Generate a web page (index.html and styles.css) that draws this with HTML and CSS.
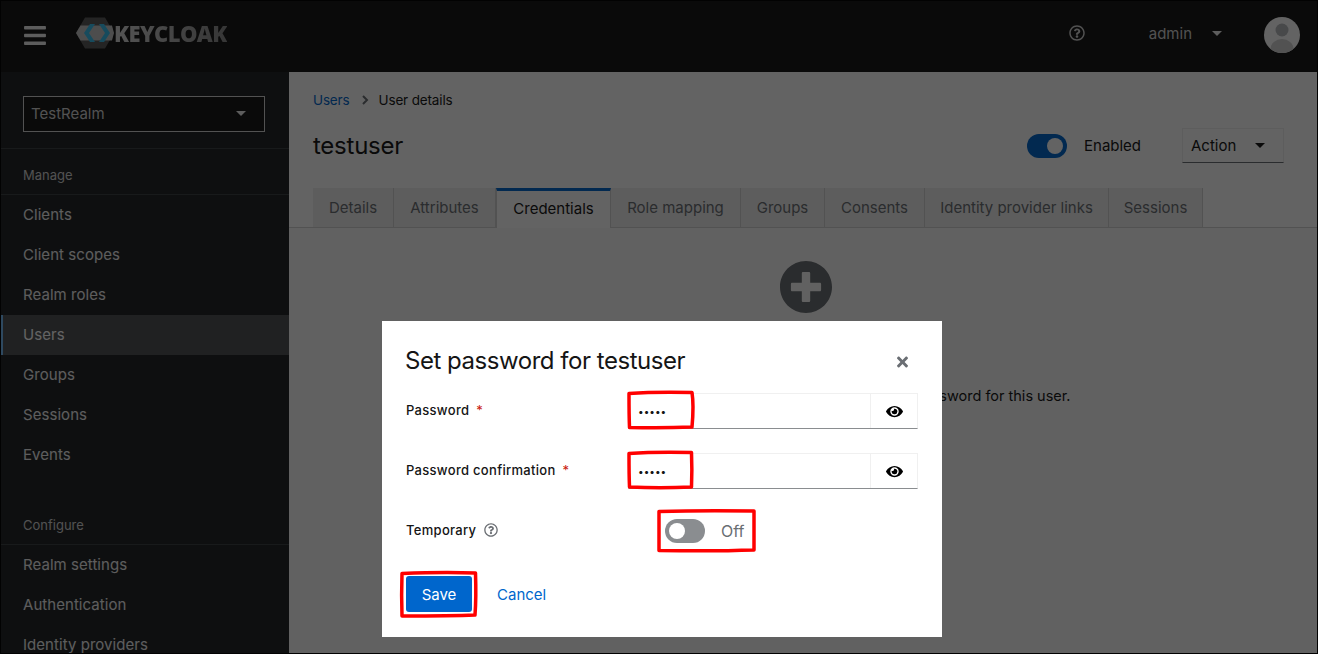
FILE: index.html
```html
<!DOCTYPE html>
<html lang="en">
<head>
<meta charset="utf-8">
<title>Keycloak</title>
<link rel="stylesheet" href="styles.css">
</head>
<body>
<div class="app">
  <header class="masthead">
    <button class="burger" aria-label="Menu"><svg viewBox="0 0 448 512" width="22" height="25"><path d="M16 132h416c8.837 0 16-7.163 16-16V76c0-8.837-7.163-16-16-16H16C7.163 60 0 67.163 0 76v40c0 8.837 7.163 16 16 16zm0 160h416c8.837 0 16-7.163 16-16v-40c0-8.837-7.163-16-16-16H16c-8.837 0-16 7.163-16 16v40c0 8.837 7.163 16 16 16zm0 160h416c8.837 0 16-7.163 16-16v-40c0-8.837-7.163-16-16-16H16c-8.837 0-16 7.163-16 16v40c0 8.837 7.163 16 16 16z"/></svg></button>
    <div class="logo">
      <svg class="logo-mark" viewBox="0 0 40 32" width="40" height="32">
        <path d="M0 16 9 0.5H29L38 16 29 31.5H9Z" fill="#5a5a5a"/>
        <path d="M0 16 4.5 8.5H36L38 16 36 23.5H4.5Z" fill="#c4c4c4"/>
        <path d="M14 7 8 16l6 9h5l-6-9 6-9Z" fill="#39c0f0"/>
        <path d="M23 7l6 9-6 9h5l6-9-6-9Z" fill="#39c0f0"/>
      </svg>
      <span class="logo-text">KEYCLOAK</span>
    </div>
    <div class="head-tools">
      <svg class="help" viewBox="0 0 512 512" width="16" height="16"><path d="M256 8C119.043 8 8 119.083 8 256c0 136.997 111.043 248 248 248s248-111.003 248-248C504 119.083 392.957 8 256 8zm0 448c-110.532 0-200-89.431-200-200 0-110.495 89.472-200 200-200 110.491 0 200 89.471 200 200 0 110.53-89.431 200-200 200zm107.244-255.2c0 67.052-72.421 68.084-72.421 92.863V300c0 6.627-5.373 12-12 12h-45.647c-6.627 0-12-5.373-12-12v-8.659c0-35.745 27.1-50.034 47.579-61.516 17.561-9.845 28.324-16.541 28.324-29.579 0-17.246-21.999-28.693-39.784-28.693-23.189 0-33.894 10.977-48.942 29.969-4.057 5.12-11.46 6.071-16.666 2.124l-27.824-21.098c-5.107-3.872-6.251-11.066-2.644-16.363C184.846 131.491 214.94 112 261.794 112c49.071 0 101.45 38.304 101.45 88.8zM298 368c0 23.159-18.841 42-42 42s-42-18.841-42-42 18.841-42 42-42 42 18.841 42 42z"/></svg>
      <span class="user">admin</span>
      <span class="caret caret-head"></span>
      <svg class="avatar" viewBox="0 0 36 36" width="36" height="36"><defs><clipPath id="av"><circle cx="18" cy="18" r="18"/></clipPath></defs><g clip-path="url(#av)"><rect width="36" height="36" fill="#fff"/><circle cx="18" cy="13" r="6.5" fill="#b8bbbe"/><ellipse cx="18" cy="32" rx="11.5" ry="10" fill="#d2d2d2"/></g></svg>
    </div>
  </header>
  <div class="body-row">
    <aside class="sidebar">
      <div class="realm-wrap">
        <div class="realm"><span>TestRealm</span><span class="caret caret-realm"></span></div>
      </div>
      <div class="nav-title first">Manage</div>
      <a class="nav-item">Clients</a>
      <a class="nav-item">Client scopes</a>
      <a class="nav-item">Realm roles</a>
      <a class="nav-item current">Users</a>
      <a class="nav-item">Groups</a>
      <a class="nav-item">Sessions</a>
      <a class="nav-item">Events</a>
      <div class="nav-title second">Configure</div>
      <a class="nav-item">Realm settings</a>
      <a class="nav-item">Authentication</a>
      <a class="nav-item">Identity providers</a>
    </aside>
    <main class="main">
      <section class="page-head">
        <nav class="crumbs"><a class="crumb-link">Users</a><svg class="crumb-sep" viewBox="0 0 10 12" width="10" height="12"><path d="M3 2l4 4-4 4" fill="none" stroke="#6a6e73" stroke-width="2"/></svg><span>User details</span></nav>
        <div class="title-row">
          <h1 class="page-title">testuser</h1>
          <div class="title-tools">
            <span class="switch on"><span class="knob"></span></span>
            <span class="switch-label">Enabled</span>
            <button class="action">Action<span class="caret caret-action"></span></button>
          </div>
        </div>
      </section>
      <div class="tabs">
        <a class="tab">Details</a>
        <a class="tab">Attributes</a>
        <a class="tab active">Credentials</a>
        <a class="tab">Role mapping</a>
        <a class="tab">Groups</a>
        <a class="tab">Consents</a>
        <a class="tab">Identity provider links</a>
        <a class="tab">Sessions</a>
      </div>
      <section class="empty">
        <svg class="empty-icon" viewBox="8 8 496 496" width="52" height="52"><path d="M256 8C119 8 8 119 8 256s111 248 248 248 248-111 248-248S393 8 256 8zm144 276c0 6.6-5.4 12-12 12h-92v92c0 6.6-5.4 12-12 12h-56c-6.6 0-12-5.4-12-12v-92h-92c-6.6 0-12-5.4-12-12v-56c0-6.6 5.4-12 12-12h92v-92c0-6.6 5.4-12 12-12h56c6.6 0 12 5.4 12 12v92h92c6.6 0 12 5.4 12 12v56z"/></svg>
        <p class="empty-text">This user does not have any credentials. You can set a password for this user.</p>
      </section>
    </main>
  </div>
</div>
<div class="backdrop"></div>
<div class="modal">
  <div class="modal-head">
    <h2 class="modal-title">Set password for testuser</h2>
    <svg class="close" viewBox="0 0 352 512" width="11" height="16"><path d="M242.72 256l100.07-100.07c12.28-12.28 12.28-32.19 0-44.48l-22.24-22.24c-12.28-12.28-32.19-12.28-44.48 0L176 189.28 75.93 89.21c-12.28-12.28-32.19-12.28-44.48 0L9.21 111.45c-12.28 12.28-12.28 32.19 0 44.48L109.28 256 9.21 356.07c-12.28 12.28-12.28 32.19 0 44.48l22.24 22.24c12.28 12.28 32.2 12.28 44.48 0L176 322.72l100.07 100.07c12.28 12.28 32.2 12.28 44.48 0l22.24-22.24c12.28-12.28 12.28-32.19 0-44.48L242.72 256z"/></svg>
  </div>
  <div class="field">
    <label class="label">Password<span class="req">*</span></label>
    <div class="input-group">
      <div class="input">•••••</div>
      <div class="eye"><svg viewBox="0 0 576 512" width="17" height="15"><path d="M572.52 241.4C518.29 135.59 410.93 64 288 64S57.68 135.64 3.48 241.41a32.35 32.35 0 0 0 0 29.19C57.71 376.41 165.07 448 288 448s230.32-71.64 284.52-177.41a32.35 32.35 0 0 0 0-29.19zM288 400a144 144 0 1 1 144-144 143.93 143.93 0 0 1-144 144zm0-240a95.31 95.31 0 0 0-25.31 3.79 47.85 47.85 0 0 1-66.9 66.9A95.78 95.78 0 1 0 288 160z"/></svg></div>
    </div>
  </div>
  <div class="field">
    <label class="label">Password confirmation<span class="req">*</span></label>
    <div class="input-group">
      <div class="input">•••••</div>
      <div class="eye"><svg viewBox="0 0 576 512" width="17" height="15"><path d="M572.52 241.4C518.29 135.59 410.93 64 288 64S57.68 135.64 3.48 241.41a32.35 32.35 0 0 0 0 29.19C57.71 376.41 165.07 448 288 448s230.32-71.64 284.52-177.41a32.35 32.35 0 0 0 0-29.19zM288 400a144 144 0 1 1 144-144 143.93 143.93 0 0 1-144 144zm0-240a95.31 95.31 0 0 0-25.31 3.79 47.85 47.85 0 0 1-66.9 66.9A95.78 95.78 0 1 0 288 160z"/></svg></div>
    </div>
  </div>
  <div class="field temp">
    <label class="label">Temporary<svg class="label-help" viewBox="0 0 512 512" width="14" height="14"><path d="M256 8C119.043 8 8 119.083 8 256c0 136.997 111.043 248 248 248s248-111.003 248-248C504 119.083 392.957 8 256 8zm0 448c-110.532 0-200-89.431-200-200 0-110.495 89.472-200 200-200 110.491 0 200 89.471 200 200 0 110.53-89.431 200-200 200zm107.244-255.2c0 67.052-72.421 68.084-72.421 92.863V300c0 6.627-5.373 12-12 12h-45.647c-6.627 0-12-5.373-12-12v-8.659c0-35.745 27.1-50.034 47.579-61.516 17.561-9.845 28.324-16.541 28.324-29.579 0-17.246-21.999-28.693-39.784-28.693-23.189 0-33.894 10.977-48.942 29.969-4.057 5.12-11.46 6.071-16.666 2.124l-27.824-21.098c-5.107-3.872-6.251-11.066-2.644-16.363C184.846 131.491 214.94 112 261.794 112c49.071 0 101.45 38.304 101.45 88.8zM298 368c0 23.159-18.841 42-42 42s-42-18.841-42-42 18.841-42 42-42 42 18.841 42 42z"/></svg></label>
    <div class="temp-control">
      <span class="switch off"><span class="knob"></span></span>
      <span class="off-label">Off</span>
    </div>
  </div>
  <div class="modal-actions">
    <button class="btn-save">Save</button>
    <a class="btn-cancel">Cancel</a>
  </div>
</div>
<svg class="marks" viewBox="0 0 1318 654" width="1318" height="654">
  <path d="M629 393.5 C650 392 670 392 692 392.5 C694 405 693 416 692 427 C670 428 650 428 629.5 427.5 C629 415 629 405 629 393.5Z"/>
  <path d="M629 453.5 C650 452 670 452 691.5 452.5 C692 465 692 476 691.5 487 C670 488 650 488 629.5 487 C629 475 629 465 629 453.5Z"/>
  <path d="M659 511.5 C690 510.5 725 510.5 754 511 C754 525 754 538 754 550 C725 551 690 551 659 550.5 C659 538 659 525 659 511.5Z"/>
  <path d="M402 573.5 C425 572.5 452 572 475.5 573 C476 588 476 602 475 615 C452 616 425 616 402 616 C401.5 602 401.5 588 402 573.5Z"/>
</svg>
</body>
</html>
```
FILE: styles.css
```css
* { box-sizing: border-box; }
html, body { margin: 0; padding: 0; height: 100%; overflow: hidden; }
body { font-family: "Inter", "Noto Sans", sans-serif; font-size: 16px; color: #151515; background: #000; }
h1, h2, p { margin: 0; font-weight: 400; }
button { font: inherit; border: 0; background: none; padding: 0; }

.app { width: 1318px; height: 654px; border: 1px solid #000; display: flex; flex-direction: column; background: #fff; overflow: hidden; }

.masthead { flex: 0 0 71px; background: #151515; display: flex; align-items: center; padding-bottom: 3px; color: #f0f0f0; }
.burger { width: 22px; height: 25px; margin-left: 23px; fill: #f0f0f0; display: flex; }
.logo { display: flex; align-items: center; margin-left: 30px; margin-top: -5px; }
.logo-mark { display: block; }
.logo-text { font-family: "Open Sans", sans-serif; font-weight: 800; font-size: 22px; letter-spacing: -0.6px; margin-left: -2px; background: linear-gradient(90deg, #d8d8d8, #8a8a8a); -webkit-background-clip: text; background-clip: text; color: transparent; }
.head-tools { margin-left: auto; display: flex; align-items: center; padding-right: 17px; }
.help { fill: #d2d2d2; margin-right: 64px; margin-top: -4px; }
.user { font-size: 15px; color: #d2d2d2; margin-top: -3px; }
.caret { display: inline-block; width: 0; height: 0; border-left: 5px solid transparent; border-right: 5px solid transparent; border-top: 5px solid #f0f0f0; }
.caret-head { margin-left: 20px; margin-right: 42px; margin-top: -4px; }
.avatar { display: block; }

.body-row { flex: 1; display: flex; min-height: 0; }
.sidebar { flex: 0 0 288px; background: #212427; color: #f0f0f0; overflow: hidden; }
.realm-wrap { padding: 24px 24px 16px 22px; border-bottom: 1px solid #3c3f42; }
.realm { height: 36px; width: 242px; border: 1px solid #d2d2d2; background: #151515; display: flex; align-items: center; justify-content: space-between; padding: 0 18px 2px 7px; font-size: 15px; color: #d2d2d2; }
.caret-realm { border-top-color: #f0f0f0; }
.nav-title { height: 46px; padding: 18px 22px 0; font-size: 13px; color: #d2d2d2; border-bottom: 1px solid #3c3f42; }
.nav-title.second { height: 70px; margin-top: 0; padding-top: 42px; }
.nav-item { display: flex; align-items: center; height: 40px; padding: 0 0 2px 22px; font-size: 15px; letter-spacing: 0.05px; color: #f0f0f0; }
.nav-item.current { background: #4f5255; box-shadow: inset 2px 0 0 #73bcf7; color: #fff; }

.main { flex: 1; background: #fff; display: flex; flex-direction: column; min-width: 0; }
.page-head { padding: 19px 33px 0 24px; height: 116px; }
.crumbs { display: flex; align-items: center; font-size: 13.5px; letter-spacing: -0.15px; height: 17px; }
.crumb-link { color: #06c; }
.crumb-sep { margin: 0 9px 0 10px; }
.title-row { display: flex; align-items: center; justify-content: space-between; margin-top: 20px; }
.page-title { font-size: 24px; letter-spacing: -0.25px; }
.title-tools { display: flex; align-items: center; }
.switch { width: 40px; height: 24px; border-radius: 12px; display: flex; align-items: center; padding: 0 4px; }
.switch.on { background: #06c; justify-content: flex-end; }
.switch.off { background: #8a8d90; }
.knob { width: 16px; height: 16px; border-radius: 50%; background: #fff; display: block; }
.switch-label { margin-left: 17px; font-size: 15px; width: 98px; }
.action { width: 102px; height: 35px; background: #fff; border: 1px solid #f0f0f0; border-bottom-color: #6a6e73; display: flex; align-items: center; justify-content: space-between; padding: 0 18px 0 8px; font-size: 15px; color: #151515; }
.caret-action { border-top-color: #151515; }

.tabs { display: grid; grid-template-columns: 81px 102px 115px 130px 84px 100px 184px 94px; justify-content: start; padding-left: 24px; height: 40px; border-bottom: 1px solid #d2d2d2; flex: 0 0 40px; }
.tab { display: flex; align-items: center; justify-content: center; font-size: 15px; color: #6a6e73; background: #f0f0f0; border-right: 1px solid #d2d2d2; height: 39px; }
.tab.active { background: #fff; color: #151515; border-top: 3px solid #06c; border-left: 1px solid #d2d2d2; height: 40px; padding-bottom: 3px; }

.empty { flex: 1; background: #fafafa; display: flex; flex-direction: column; align-items: center; padding-top: 33px; }
.empty-icon { fill: #6a6e73; display: block; margin-left: 6px; }
.empty-text { margin-top: 74px; margin-left: 2px; font-size: 14.5px; color: #151515; }

.backdrop { position: absolute; inset: 0; background: rgba(3, 3, 3, 0.62); }
.modal { position: absolute; left: 382px; top: 321px; width: 560px; height: 316px; background: #fff; padding: 23px 24px 0 23px; }
.modal-head { display: flex; align-items: center; justify-content: space-between; height: 32px; margin-bottom: 17px; }
.modal-title { font-size: 24px; letter-spacing: -0.47px; color: #151515; }
.close { fill: #6a6e73; margin-right: 10px; margin-top: 4px; }
.field { display: flex; align-items: center; height: 36px; margin-bottom: 24px; }
.label { width: 223px; flex: none; padding: 0 0 2px 1px; font-size: 13px; font-weight: 500; letter-spacing: 0.3px; color: #151515; display: flex; align-items: center; }
.req { color: #c9190b; margin-left: 7px; font-weight: 400; }
.input-group { flex: 1; display: flex; height: 36px; border: 1px solid #f0f0f0; border-bottom-color: #8a8d90; }
.input { flex: 1; display: flex; align-items: center; padding-left: 9px; font-size: 10px; color: #151515; }
.eye { width: 47px; border-left: 1px solid #f0f0f0; display: flex; align-items: center; justify-content: center; }
.temp { height: 42px; margin-bottom: 0; margin-top: -3px; }
.label-help { margin-left: 8px; fill: #6a6e73; }
.temp-control { display: flex; align-items: center; margin-left: 37px; }
.off-label { margin-left: 16px; font-size: 16px; color: #6a6e73; }
.modal-actions { display: flex; align-items: center; margin-top: 24px; }
.btn-save { width: 66px; height: 36px; background: #06c; color: #fff; border-radius: 3px; font-size: 15px; margin-left: 1px; }
.btn-cancel { margin-left: 25px; color: #06c; font-size: 15px; }

.marks { position: absolute; left: 0; top: 0; pointer-events: none; }
.marks path { fill: none; stroke: #f00; stroke-width: 3.5; stroke-linejoin: round; }
```
